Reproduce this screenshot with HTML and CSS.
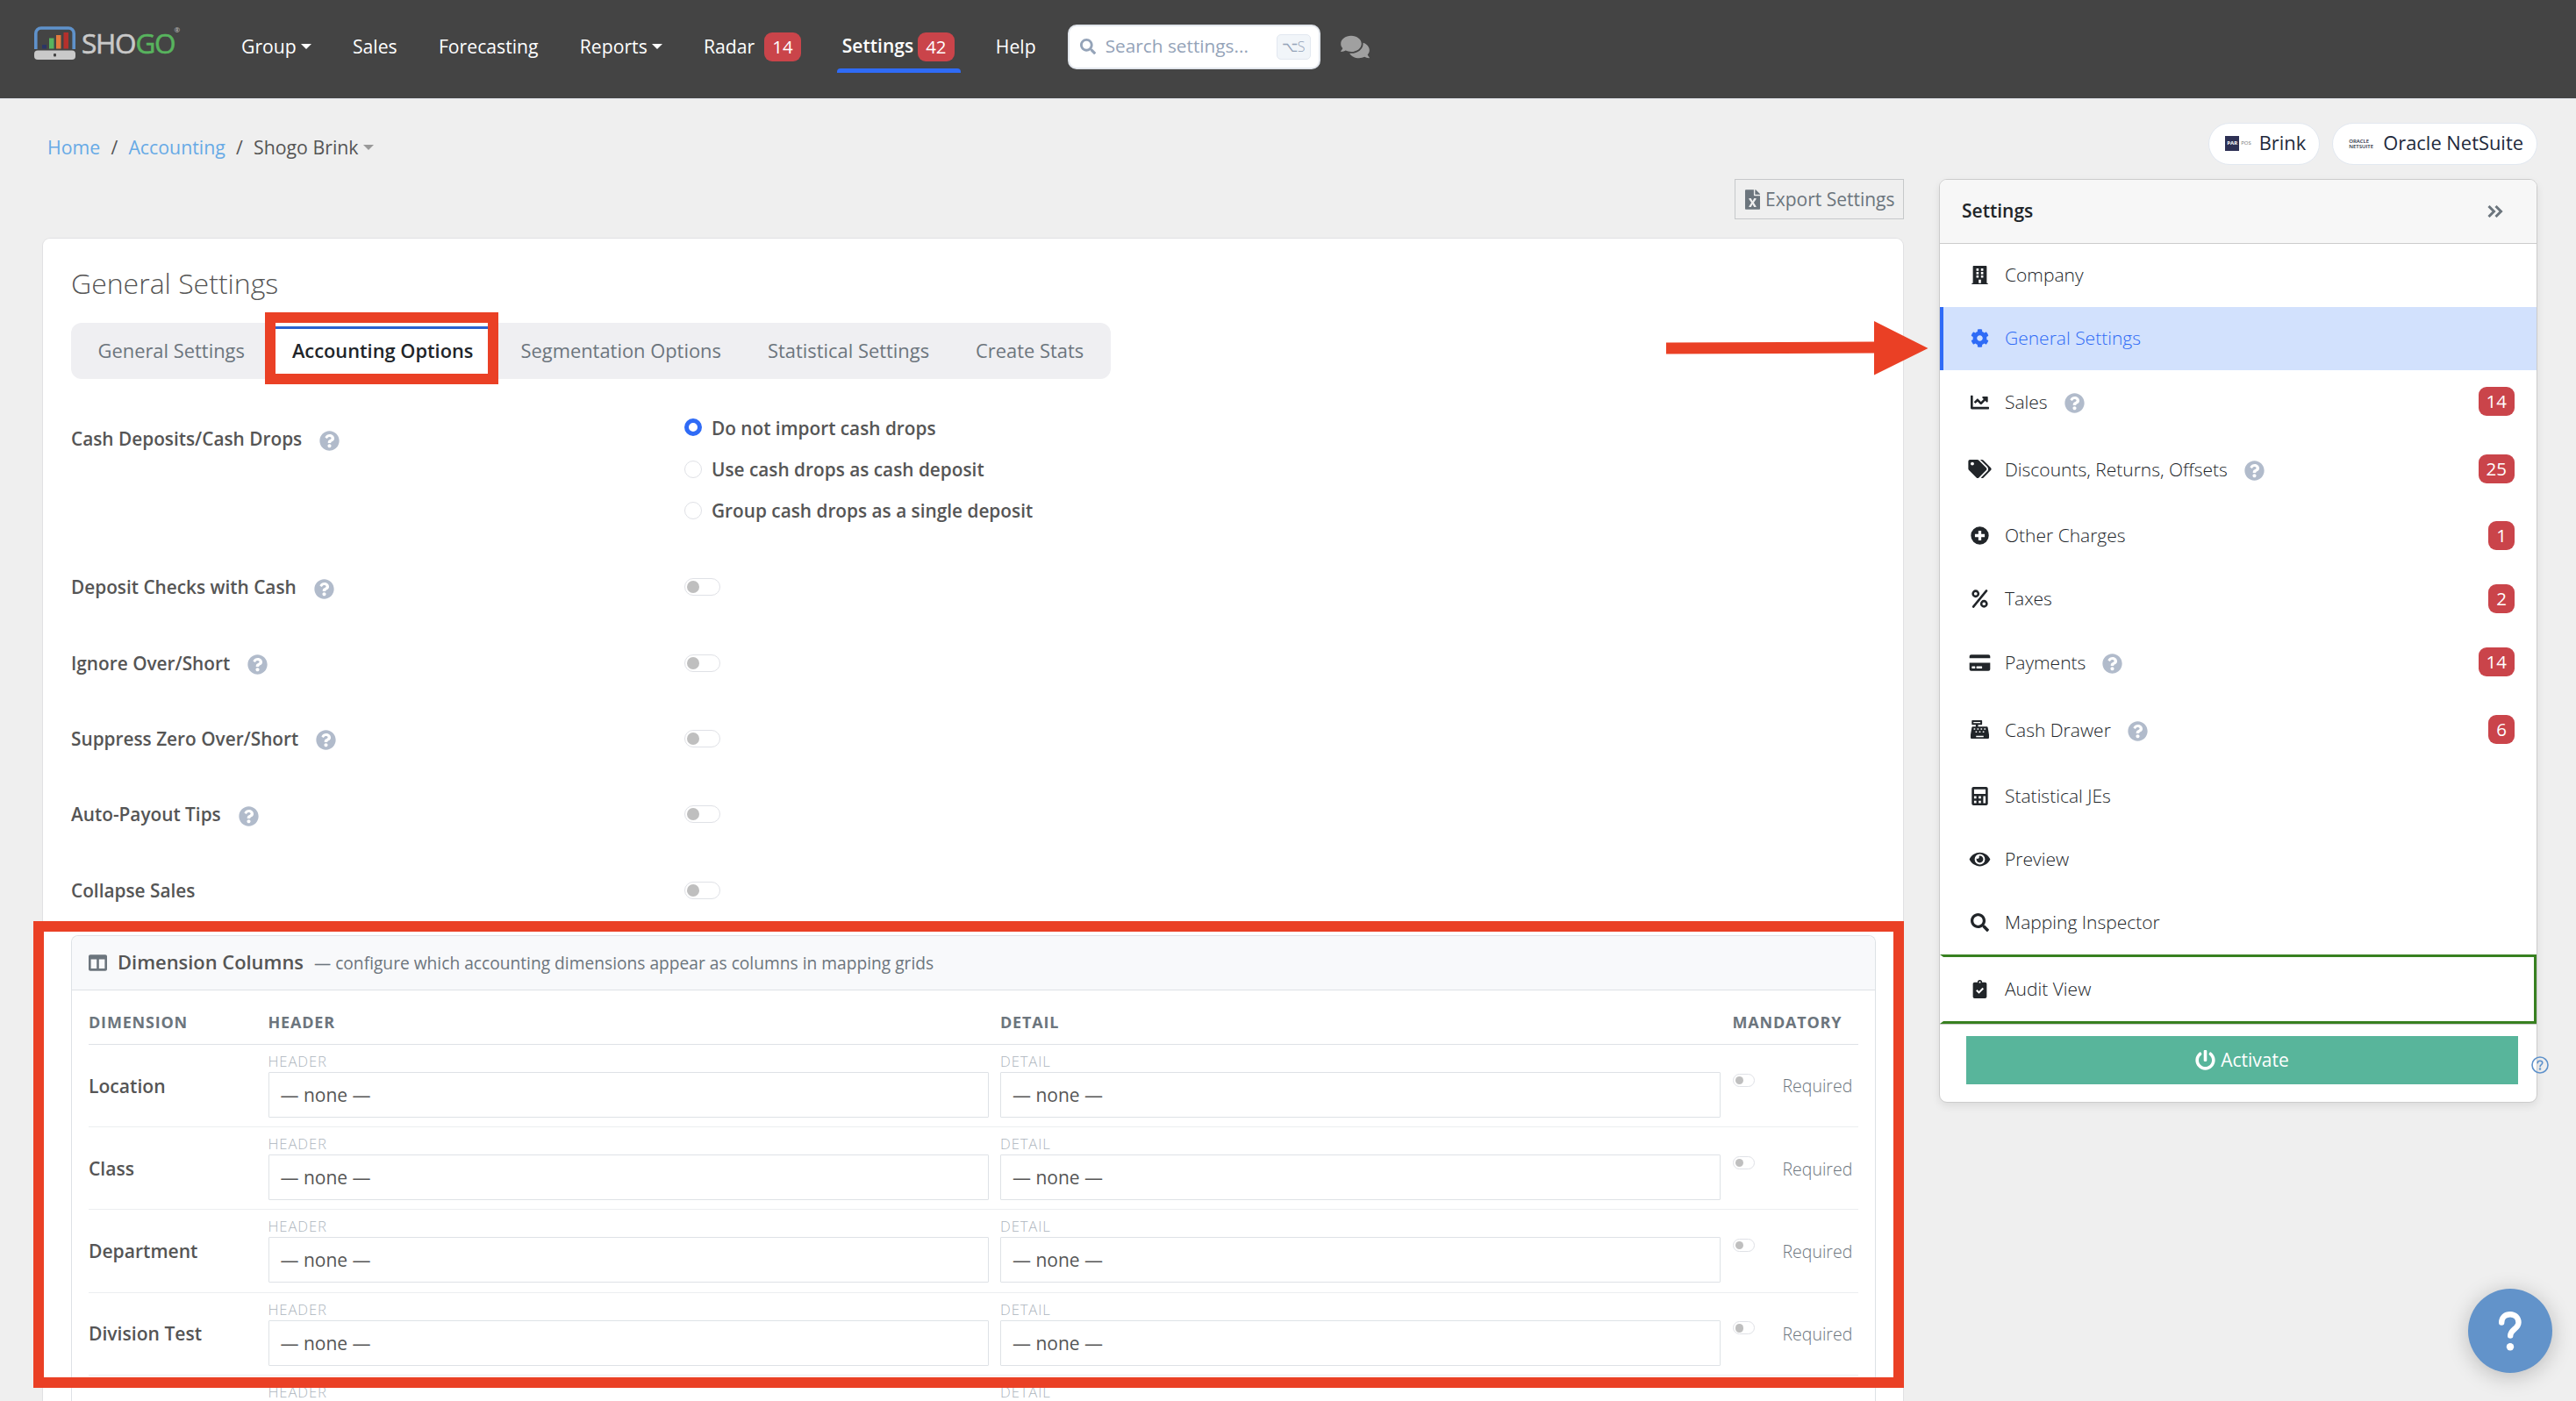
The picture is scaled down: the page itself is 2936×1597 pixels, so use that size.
FILE: index.html
```
<!DOCTYPE html>
<html lang="en">
<head>
  <meta charset="utf-8">
  <title>Shogo - General Settings</title>
  <link rel="stylesheet" href="styles.css">
</head>
<body>
  <svg class="sprite" width="0" height="0">
    <symbol id="i-help" viewBox="0 0 512 512"><path d="M504 256c0 136.997-111.043 248-248 248S8 392.997 8 256C8 119.083 119.043 8 256 8s248 111.083 248 248zM262.655 90c-54.497 0-89.255 22.957-116.549 63.758-3.536 5.286-2.353 12.415 2.715 16.258l34.699 26.31c5.205 3.947 12.621 3.008 16.665-2.122 17.864-22.658 30.113-35.797 57.303-35.797 20.429 0 45.698 13.148 45.698 32.958 0 14.976-12.363 22.667-32.534 33.976C247.128 238.528 216 254.941 216 296v4c0 6.627 5.373 12 12 12h56c6.627 0 12-5.373 12-12v-1.333c0-28.462 83.186-29.647 83.186-106.667 0-58.002-60.165-102-116.531-102zM256 338c-25.365 0-46 20.635-46 46 0 25.364 20.635 46 46 46s46-20.636 46-46c0-25.365-20.635-46-46-46z"/></symbol>
    <symbol id="i-search" viewBox="0 0 512 512"><path d="M505 442.7L405.3 343c-4.5-4.5-10.6-7-17-7H372c27.6-35.3 44-79.7 44-128C416 93.1 322.9 0 208 0S0 93.1 0 208s93.1 208 208 208c48.3 0 92.7-16.4 128-44v16.3c0 6.4 2.5 12.5 7 17l99.7 99.7c9.4 9.4 24.6 9.4 33.9 0l28.3-28.3c9.4-9.4 9.4-24.6.1-34zM208 336c-70.7 0-128-57.2-128-128 0-70.7 57.2-128 128-128 70.7 0 128 57.2 128 128 0 70.7-57.2 128-128 128z"/></symbol>
    <symbol id="i-comments" viewBox="0 0 576 512"><path d="M416 192c0-88.4-93.1-160-208-160S0 103.6 0 192c0 34.3 14.1 65.9 38 92-13.4 30.2-35.5 54.2-35.8 54.5-2.2 2.3-2.8 5.7-1.5 8.7S4.8 352 8 352c36.6 0 66.9-12.3 88.7-25 32.2 15.7 70.3 25 111.3 25 114.9 0 208-71.6 208-160zm122 220c23.9-26 38-57.7 38-92 0-66.9-53.5-124.2-129.3-148.1.9 6.6 1.3 13.3 1.3 20.1 0 105.9-107.7 192-240 192-10.8 0-21.3-.8-31.7-1.9C207.8 439.6 281.8 480 368 480c41 0 79.1-9.2 111.3-25 21.8 12.7 52.1 25 88.7 25 3.2 0 6.1-1.9 7.3-4.8 1.3-2.9.7-6.3-1.5-8.7-.3-.3-22.4-24.2-35.8-54.5z"/></symbol>
    <symbol id="i-excel" viewBox="0 0 384 512"><path d="M224 136V0H24C10.7 0 0 10.7 0 24v464c0 13.3 10.7 24 24 24h336c13.3 0 24-10.7 24-24V160H248c-13.2 0-24-10.8-24-24zm60.1 106.5L224 336l60.1 93.5c5.1 8-.6 18.5-10.1 18.5h-34.9c-4.4 0-8.5-2.4-10.6-6.3C208.9 405.5 192 373 192 373c-6.4 14.8-10 20-36.6 68.8-2.1 3.9-6.1 6.3-10.5 6.3H110c-9.5 0-15.2-10.5-10.1-18.5l60.3-93.5-60.3-93.5c-5.2-8 .6-18.5 10.1-18.5h34.8c4.4 0 8.5 2.4 10.6 6.3 26.1 48.8 20 33.6 36.6 68.5 0 0 6.1-11.7 36.6-68.5 2.1-3.9 6.2-6.3 10.6-6.3H274c9.5-.1 15.2 10.4 10.1 18.4zM384 121.9v6.1H256V0h6.1c6.4 0 12.5 2.5 17 7l97.9 98c4.5 4.5 7 10.6 7 16.9z"/></symbol>
    <symbol id="i-columns" viewBox="0 0 512 512"><path d="M464 32H48C21.49 32 0 53.49 0 80v352c0 26.51 21.49 48 48 48h416c26.51 0 48-21.49 48-48V80c0-26.51-21.49-48-48-48zM224 416H64V160h160v256zm224 0H288V160h160v256z"/></symbol>
    <symbol id="i-building" viewBox="0 0 448 512"><path fill-rule="evenodd" d="M436 480h-20V24c0-13.3-10.7-24-24-24H56C42.7 0 32 10.7 32 24v456H12c-6.6 0-12 5.4-12 12v20h448v-20c0-6.6-5.4-12-12-12zM128 76h64v64h-64zM256 76h64v64h-64zM128 172h64v64h-64zM256 172h64v64h-64zM128 268h64v64h-64zM256 268h64v64h-64zM192 384h64v96h-64z"/></symbol>
    <symbol id="i-cog" viewBox="0 0 512 512"><path d="M487.4 315.7l-42.6-24.6c4.3-23.2 4.3-47 0-70.2l42.6-24.6c4.9-2.8 7.1-8.6 5.5-14-11.1-35.6-30-67.8-54.7-94.6-3.8-4.1-10-5.1-14.8-2.3L380.8 110c-17.9-15.4-38.5-27.3-60.8-35.1V25.8c0-5.6-3.9-10.5-9.4-11.7-36.7-8.2-74.3-7.8-109.2 0-5.5 1.2-9.4 6.1-9.4 11.7V75c-22.2 7.9-42.8 19.8-60.8 35.1L88.7 85.5c-4.9-2.8-11-1.9-14.8 2.3-24.7 26.7-43.6 58.9-54.7 94.6-1.7 5.4.6 11.2 5.5 14L67.3 221c-4.3 23.2-4.3 47 0 70.2l-42.6 24.6c-4.9 2.8-7.1 8.6-5.5 14 11.1 35.6 30 67.8 54.7 94.6 3.8 4.1 10 5.1 14.8 2.3l42.6-24.6c17.9 15.4 38.5 27.3 60.8 35.1v49.2c0 5.6 3.9 10.5 9.4 11.7 36.7 8.2 74.3 7.8 109.2 0 5.5-1.2 9.4-6.1 9.4-11.7v-49.2c22.2-7.9 42.8-19.8 60.8-35.1l42.6 24.6c4.9 2.8 11 1.9 14.8-2.3 24.7-26.7 43.6-58.9 54.7-94.6 1.5-5.5-.7-11.3-5.6-14.1zM256 336c-44.1 0-80-35.9-80-80s35.9-80 80-80 80 35.9 80 80-35.9 80-80 80z"/></symbol>
    <symbol id="i-chart" viewBox="0 0 512 512"><path d="M496 384H64V80c0-8.84-7.16-16-16-16H16C7.16 64 0 71.16 0 80v336c0 17.67 14.33 32 32 32h464c8.84 0 16-7.16 16-16v-32c0-8.84-7.16-16-16-16zM464 96H345.94c-21.38 0-32.09 25.85-16.97 40.97l32.4 32.4L288 242.75l-73.37-73.37c-12.5-12.5-32.76-12.5-45.25 0l-68.69 68.69c-6.25 6.25-6.25 16.38 0 22.63l22.62 22.62c6.25 6.25 16.38 6.25 22.63 0L192 237.25l73.37 73.37c12.5 12.5 32.76 12.5 45.25 0l96-96 32.4 32.4c15.12 15.12 40.97 4.41 40.97-16.97V112c.01-8.84-7.15-16-15.99-16z"/></symbol>
    <symbol id="i-tags" viewBox="0 0 640 512"><path d="M497.941 225.941L286.059 14.059A48 48 0 0 0 252.118 0H48C21.49 0 0 21.49 0 48v204.118a48 48 0 0 0 14.059 33.941l211.882 211.882c18.744 18.745 49.136 18.746 67.882 0l204.118-204.118c18.745-18.745 18.745-49.137 0-67.882zM112 160c-26.51 0-48-21.49-48-48s21.49-48 48-48 48 21.49 48 48-21.49 48-48 48zm513.941 133.823L421.823 497.941c-18.745 18.745-49.137 18.745-67.882 0l-.36-.36L527.64 323.522c16.999-16.999 26.36-39.6 26.36-63.64s-9.362-46.641-26.36-63.64L331.397 0h48.721a48 48 0 0 1 33.941 14.059l211.882 211.882c18.745 18.745 18.745 49.137 0 67.882z"/></symbol>
    <symbol id="i-plus" viewBox="0 0 512 512"><path fill-rule="evenodd" d="M256 8a248 248 0 1 0 0 496a248 248 0 1 0 0-496zM216 120h80v96h96v80h-96v96h-80v-96h-96v-80h96z"/></symbol>
    <symbol id="i-percent" viewBox="0 0 448 512"><g fill="none" stroke="currentColor" stroke-width="62"><circle cx="108" cy="116" r="76"/><circle cx="340" cy="396" r="76"/><path stroke-linecap="round" d="M408 34L44 478"/></g></symbol>
    <symbol id="i-card" viewBox="0 0 576 512"><path d="M0 432c0 26.5 21.5 48 48 48h480c26.5 0 48-21.5 48-48V256H0v176zm192-68c0-6.6 5.4-12 12-12h136c6.6 0 12 5.4 12 12v40c0 6.6-5.4 12-12 12H204c-6.6 0-12-5.4-12-12v-40zm-128 0c0-6.6 5.4-12 12-12h72c6.6 0 12 5.4 12 12v40c0 6.6-5.4 12-12 12H76c-6.6 0-12-5.4-12-12v-40zM576 80v48H0V80c0-26.5 21.5-48 48-48h480c26.5 0 48 21.5 48 48z"/></symbol>
    <symbol id="i-register" viewBox="0 0 512 512"><path fill-rule="evenodd" d="M48 0h256c9 0 16 7 16 16v96c0 9-7 16-16 16h-96v48h240c16 0 29 11 31 27l33 202v75c0 18-14 32-32 32H32c-18 0-32-14-32-32v-75l33-202c2-16 15-27 31-27h80v-48H48c-9 0-16-7-16-16V16C32 7 39 0 48 0zM80 48v32h192V48zM88 224h40v40H88zM184 224h40v40h-40zM280 224h40v40h-40zM376 224h40v40h-40zM136 304h40v40h-40zM236 304h40v40h-40zM336 304h40v40h-40zM152 432h208v36H152z"/></symbol>
    <symbol id="i-calculator" viewBox="0 0 448 512"><path fill-rule="evenodd" d="M400 0H48C22.4 0 0 22.4 0 48v416c0 25.6 22.4 48 48 48h352c25.6 0 48-22.4 48-48V48c0-25.6-22.4-48-48-48zM64 64h320v128H64zM64 256h64v64H64zM192 256h64v64h-64zM320 256h64v192h-64zM64 384h64v64H64zM192 384h64v64h-64z"/></symbol>
    <symbol id="i-eye" viewBox="0 0 576 512"><path d="M572.52 241.4C518.29 135.59 410.93 64 288 64S57.68 135.64 3.48 241.41a32.35 32.35 0 0 0 0 29.19C57.71 376.41 165.07 448 288 448s230.32-71.64 284.52-177.41a32.35 32.35 0 0 0 0-29.19zM288 400a144 144 0 1 1 144-144 143.93 143.93 0 0 1-144 144zm0-240a95.31 95.31 0 0 0-25.31 3.79 47.85 47.85 0 0 1-66.9 66.9A95.78 95.78 0 1 0 288 160z"/></symbol>
    <symbol id="i-clipboard" viewBox="0 0 384 512"><path fill-rule="evenodd" d="M336 64h-80a64 64 0 0 0-128 0H48C21.5 64 0 85.5 0 112v352c0 26.5 21.5 48 48 48h288c26.5 0 48-21.5 48-48V112c0-26.5-21.5-48-48-48zM192 40a24 24 0 1 1 0 48a24 24 0 1 1 0-48zM84 302l36-36 48 48 98-98 36 36-134 134z"/></symbol>
    <symbol id="i-power" viewBox="0 0 512 512"><path d="M400 54.1c63 45 104 118.6 104 201.9 0 136.8-110.8 247.7-247.5 248C120 504.3 8.2 393 8 256.4 7.9 173.1 48.9 99.3 111.8 54.2c11.7-8.3 28-4.8 35 7.7L162.6 90c5.9 10.5 3.1 23.8-6.6 31-41.5 30.8-68 79.6-68 134.9-.1 92.3 74.5 168.1 168 168.1 91.6 0 168.6-74.2 168-169.1-.3-51.8-24.7-101.8-68.1-134-9.7-7.2-12.4-20.5-6.5-30.9l15.8-28.1c7-12.4 23.2-16.1 34.8-7.8zM296 264V24c0-13.3-10.7-24-24-24h-32c-13.3 0-24 10.7-24 24v240c0 13.3 10.7 24 24 24h32c13.3 0 24-10.7 24-24z"/></symbol>
  </svg>

  <header class="navbar">
    <a class="logo">
      <svg width="48" height="38" viewBox="0 0 48 38">
        <path d="M1.8 26V8a6 6 0 0 1 6-6h31.4a6 6 0 0 1 6 6v18" fill="none" stroke="#5f92cb" stroke-width="3.6"/>
        <rect x="9" y="21" width="5" height="4.5" fill="#2b3566"/>
        <rect x="17" y="13.5" width="5.5" height="12" fill="#58b45e"/>
        <rect x="25" y="10" width="5.5" height="15.5" fill="#e27a3d"/>
        <rect x="33.5" y="7" width="5.5" height="18.5" fill="#b5302c"/>
        <rect x="0" y="27.5" width="47" height="10.5" rx="4" fill="#c9c9c9"/>
        <rect x="22" y="31" width="3" height="3.5" rx="1" fill="#444"/>
      </svg>
      <span class="logo-text">SHO<b>GO</b></span><sup>®</sup>
    </a>
    <nav class="nav">
      <a>Group<i class="caret"></i></a>
      <a>Sales</a>
      <a>Forecasting</a>
      <a>Reports<i class="caret"></i></a>
      <a>Radar<span class="badge radar-badge">14</span></a>
      <a class="current">Settings<span class="badge">42</span></a>
      <a>Help</a>
    </nav>
    <div class="search">
      <svg class="search-icon"><use href="#i-search"/></svg>
      <span>Search settings...</span>
      <kbd>⌥S</kbd>
    </div>
    <svg class="comments"><use href="#i-comments"/></svg>
  </header>

  <div class="topline">
    <div class="breadcrumb">
      <a>Home</a><span class="sep">/</span><a>Accounting</a><span class="sep">/</span><span class="here">Shogo Brink</span><i class="caret small"></i>
    </div>
    <div class="pills">
      <span class="pill"><span class="par"><b>PAR</b>POS</span>Brink</span>
      <span class="pill"><span class="oracle">ORACLE<br>NETSUITE</span>Oracle NetSuite</span>
    </div>
  </div>

  <div class="page">
    <main class="main">
      <button class="export"><svg><use href="#i-excel"/></svg>Export Settings</button>

      <section class="card">
        <h1>General Settings</h1>
        <div class="tabs">
          <a>General Settings</a>
          <a class="active">Accounting Options</a>
          <a>Segmentation Options</a>
          <a>Statistical Settings</a>
          <a>Create Stats</a>
        </div>

        <div class="option option-top">
          <label>Cash Deposits/Cash Drops<svg class="help"><use href="#i-help"/></svg></label>
          <div class="radios">
            <div class="radio"><i class="dot checked"></i>Do not import cash drops</div>
            <div class="radio"><i class="dot"></i>Use cash drops as cash deposit</div>
            <div class="radio"><i class="dot"></i>Group cash drops as a single deposit</div>
          </div>
        </div>
        <div class="option"><label>Deposit Checks with Cash<svg class="help"><use href="#i-help"/></svg></label><i class="toggle"></i></div>
        <div class="option"><label>Ignore Over/Short<svg class="help"><use href="#i-help"/></svg></label><i class="toggle"></i></div>
        <div class="option"><label>Suppress Zero Over/Short<svg class="help"><use href="#i-help"/></svg></label><i class="toggle"></i></div>
        <div class="option"><label>Auto-Payout Tips<svg class="help"><use href="#i-help"/></svg></label><i class="toggle"></i></div>
        <div class="option"><label>Collapse Sales</label><i class="toggle"></i></div>

        <div class="panel">
          <div class="panel-head">
            <svg><use href="#i-columns"/></svg>
            <strong>Dimension Columns</strong>
            <span>— configure which accounting dimensions appear as columns in mapping grids</span>
          </div>
          <div class="grid">
            <div class="row head"><span>Dimension</span><span>Header</span><span>Detail</span><span>Mandatory</span></div>
            <div class="row">
              <div class="name">Location</div>
              <div class="field"><small>Header</small><div class="select">— none —</div></div>
              <div class="field"><small>Detail</small><div class="select">— none —</div></div>
              <div class="required"><i class="toggle mini"></i>Required</div>
            </div>
            <div class="row">
              <div class="name">Class</div>
              <div class="field"><small>Header</small><div class="select">— none —</div></div>
              <div class="field"><small>Detail</small><div class="select">— none —</div></div>
              <div class="required"><i class="toggle mini"></i>Required</div>
            </div>
            <div class="row">
              <div class="name">Department</div>
              <div class="field"><small>Header</small><div class="select">— none —</div></div>
              <div class="field"><small>Detail</small><div class="select">— none —</div></div>
              <div class="required"><i class="toggle mini"></i>Required</div>
            </div>
            <div class="row">
              <div class="name">Division Test</div>
              <div class="field"><small>Header</small><div class="select">— none —</div></div>
              <div class="field"><small>Detail</small><div class="select">— none —</div></div>
              <div class="required"><i class="toggle mini"></i>Required</div>
            </div>
            <div class="row cut">
              <div class="name"></div>
              <div class="field"><small>Header</small></div>
              <div class="field"><small>Detail</small></div>
              <div class="required"></div>
            </div>
          </div>
        </div>
      </section>
    </main>

    <aside class="side">
      <div class="side-head">Settings
        <svg width="18" height="14" viewBox="0 0 18 14" fill="none" stroke="#6c757d" stroke-width="3"><path d="M1.5 1l6 6-6 6M9.5 1l6 6-6 6"/></svg>
      </div>
      <a class="item"><svg><use href="#i-building"/></svg>Company</a>
      <a class="item selected"><svg><use href="#i-cog"/></svg>General Settings</a>
      <a class="item tall"><svg><use href="#i-chart"/></svg>Sales<svg class="help"><use href="#i-help"/></svg><span class="badge">14</span></a>
      <a class="item tall"><svg><use href="#i-tags"/></svg>Discounts, Returns, Offsets<svg class="help"><use href="#i-help"/></svg><span class="badge">25</span></a>
      <a class="item"><svg><use href="#i-plus"/></svg>Other Charges<span class="badge">1</span></a>
      <a class="item"><svg><use href="#i-percent"/></svg>Taxes<span class="badge">2</span></a>
      <a class="item tall"><svg><use href="#i-card"/></svg>Payments<svg class="help"><use href="#i-help"/></svg><span class="badge">14</span></a>
      <a class="item tall"><svg><use href="#i-register"/></svg>Cash Drawer<svg class="help"><use href="#i-help"/></svg><span class="badge">6</span></a>
      <a class="item"><svg><use href="#i-calculator"/></svg>Statistical JEs</a>
      <a class="item"><svg><use href="#i-eye"/></svg>Preview</a>
      <a class="item"><svg><use href="#i-search"/></svg>Mapping Inspector</a>
      <a class="item audit"><svg><use href="#i-clipboard"/></svg>Audit View</a>
      <div class="side-foot">
        <button class="activate"><svg><use href="#i-power"/></svg>Activate</button>
        <svg class="tip" viewBox="0 0 20 20" fill="none" stroke="#5f92cb" stroke-width="1.6"><circle cx="10" cy="10" r="9"/><path d="M7.2 7.8c0-1.7 1.200-2.600 2.800-2.600s2.800 1 2.800 2.400c0 2-2.700 1.900-2.700 4.100" stroke-linecap="round"/><circle cx="10" cy="14.500" r=".5"/></svg>
      </div>
    </aside>
  </div>

  <!-- callouts drawn over the page -->
  <div class="mark mark-tab"></div>
  <div class="mark mark-panel"></div>
  <svg class="arrow" width="300" height="64" viewBox="0 0 300 64"><path d="M0 25.500l237-1V1l61.500 31L237 62.500V37.500L0 38.500z" fill="#ea4025"/></svg>

  <button class="fab">
    <svg width="32" height="48" viewBox="0 0 32 48" fill="none" stroke="#fff" stroke-width="6.400" stroke-linecap="round"><path d="M6.200 14.500c0-6 4.300-9.300 9.800-9.300s9.500 3.900 9.500 9.200c0 7.300-9.300 7.800-9.300 15.200"/><circle cx="16" cy="42.300" r="4.200" fill="#fff" stroke="none"/></svg>
  </button>
</body>
</html>
```
FILE: styles.css
```
* {
  box-sizing: border-box;
}
html, body {
  height: 1597px;
  overflow: hidden;
}
body {
  position: relative;
  margin: 0;
  background: #efefef;
  color: #555;
  font-family: "Open Sans", sans-serif;
  font-size: 21px;
  line-height: 1.4;
}
svg {
  fill: currentColor;
  flex: none;
}
svg[fill="none"] {
  fill: none;
}
.sprite {
  position: absolute;
}
button {
  font: inherit;
  border: none;
  padding: 0;
}

/* top bar */
.navbar {
  display: flex;
  align-items: center;
  height: 113px;
  padding: 0 0 6px 39px;
  background: #444;
  border-bottom: 1px solid #dfe2e8;
  color: #fff;
}
.logo {
  display: flex;
  align-items: center;
  width: 236px;
  margin-top: -8px;
}
.logo-text {
  margin-left: 6px;
  font-size: 31.5px;
  letter-spacing: -1.2px;
  color: #c9c9c9;
  -webkit-text-stroke: 0.6px;
}
.logo-text b {
  font-weight: 400;
  color: #58b45e;
}
.logo sup {
  align-self: flex-start;
  font-size: 8px;
  margin-top: 1px;
  margin-left: -1px;
  color: #c9c9c9;
}
.nav {
  display: flex;
  align-items: center;
  gap: 47.2px;
  font-size: 21.2px;
}
.nav a {
  display: flex;
  align-items: center;
}
.caret {
  margin-left: 5px;
  border: 6px solid transparent;
  border-top-color: currentColor;
  border-bottom: 0;
}
.caret.small {
  border-width: 6px;
  border-bottom: 0;
  color: #999;
}
.badge {
  height: 33px;
  padding: 0 9px;
  border-radius: 9px;
  background: #ca444a;
  color: #fff;
  font-size: 20.5px;
  font-weight: 400;
  line-height: 33px;
}
.nav .badge {
  margin-left: 5px;
}
.nav .radar-badge {
  margin-left: 11px;
}
.nav .current {
  position: relative;
  font-weight: 600;
  font-size: 21px;
}
.nav .current::after {
  content: "";
  position: absolute;
  left: -6px;
  right: -7px;
  top: 41px;
  height: 5px;
  border-radius: 4px 4px 0 0;
  background: #2f6bf6;
}
.search {
  display: flex;
  align-items: center;
  width: 288px;
  height: 51px;
  margin-left: 36px;
  padding: 0 9px 0 12px;
  border: 2px solid #e2e6ec;
  border-radius: 10px;
  background: #fff;
  color: #94a3b8;
  font-size: 20.8px;
}
.search-icon {
  width: 18px;
  height: 18px;
  margin-right: 11px;
}
kbd {
  width: 39px;
  height: 29px;
  margin-left: auto;
  border: 1px solid #e2e8f0;
  border-radius: 5px;
  background: #f1f5f9;
  font: 300 16px/26px "Open Sans", "DejaVu Sans", sans-serif;
  text-align: center;
}
.comments {
  width: 33px;
  height: 29px;
  margin-left: 23px;
  color: #a0a0a0;
}

/* breadcrumb and integrations */
.topline {
  display: flex;
  justify-content: space-between;
  align-items: center;
  height: 48px;
  margin: 27px 44px 16px 54px;
}
.breadcrumb {
  display: flex;
  align-items: center;
  padding-top: 8px;
  font-size: 21.3px;
}
.breadcrumb a {
  color: #67aae6;
}
.breadcrumb .sep {
  margin: 0 12.2px;
}
.pills {
  display: flex;
  gap: 14px;
}
.pill {
  display: flex;
  align-items: center;
  height: 48px;
  padding: 0 15px 1px 18px;
  border: 1px solid #e2e8f0;
  border-radius: 24px;
  background: #fff;
  color: #1e293b;
  font-size: 21.9px;
}
.par {
  display: flex;
  align-items: center;
  width: 38.5px;
  font-size: 6px;
  color: #777;
}
.par b {
  width: 16px;
  height: 17px;
  margin-right: 2px;
  background: #2d3054;
  color: #fff;
  line-height: 17px;
  text-align: center;
}
.oracle {
  width: 39px;
  font-size: 6px;
  font-weight: 600;
  line-height: 6px;
}

.page {
  display: flex;
  align-items: flex-start;
  gap: 40px;
  padding-left: 48px;
}
.main {
  width: 2122px;
}
.export {
  display: flex;
  align-items: center;
  width: 193px;
  height: 46px;
  margin: 0 0 21px auto;
  padding: 1px 0 0 11px;
  border: 1px solid #c6c8ca;
  background: #efefef;
  color: #6c757d;
}
.export svg {
  width: 17px;
  height: 23px;
  margin-right: 6px;
}
.card {
  height: 1326px;
  padding: 28px 31px 0 32px;
  border: 1px solid #e1e1e3;
  border-bottom: 0;
  border-radius: 9px 9px 0 0;
  background: #fff;
}
h1 {
  margin: 0 0 23px;
  padding-top: 1px;
  font-size: 32px;
  font-weight: 300;
  line-height: 44px;
}
.tabs {
  display: inline-flex;
  height: 64px;
  padding: 4px;
  border-radius: 12px;
  background: #efeff2;
  vertical-align: top;
  color: #6c757d;
  font-size: 21.9px;
}
.tabs a {
  padding: 0 26.5px;
  line-height: 55px;
}
.tabs .active {
  padding: 0 27.5px;
  border-top: 3px solid #2b62cf;
  background: #fff;
  box-shadow: 0 -4px 0 #fff;
  color: #212529;
  font-size: 21.8px;
  font-weight: 600;
  line-height: 50px;
}

/* options */
.option {
  display: flex;
  align-items: center;
  height: 86.4px;
  font-size: 20.8px;
  font-weight: 600;
}
.option-top {
  align-items: flex-start;
  height: 162px;
  margin-top: 32px;
}
.option label {
  display: flex;
  align-items: center;
  width: 699px;
  padding-top: 1px;
}
.option-top label {
  height: 48px;
  margin-top: 12px;
}
.help {
  width: 23px;
  height: 23px;
  margin: 3px 0 0 20px;
  color: #b1bbcb;
}
.radio {
  display: flex;
  align-items: center;
  height: 47.4px;
  padding-top: 1px;
}
.dot {
  width: 20px;
  height: 20px;
  margin: -2px 11px 0 0;
  border: 1px solid #dfe1e6;
  border-radius: 50%;
}
.dot.checked {
  border: 5.5px solid #2f6bf6;
}
.toggle {
  width: 41px;
  height: 20px;
  padding: 2px;
  border: 1px solid #dfe1e6;
  border-radius: 10px;
}
.toggle::before {
  content: "";
  display: block;
  width: 14px;
  height: 14px;
  border-radius: 50%;
  background: #bfbfbf;
}
.toggle.mini {
  width: 25px;
  height: 15px;
  margin: -14px 32px 0 0;
}
.toggle.mini::before {
  width: 9.5px;
  height: 9.5px;
}

/* dimension columns */
.panel {
  height: 531px;
  margin-top: 8px;
  border: 1px solid #dee2e6;
  border-bottom: 0;
  border-radius: 8px 8px 0 0;
}
.panel-head {
  display: flex;
  align-items: center;
  height: 62px;
  padding-left: 19px;
  border-bottom: 1px solid #dee2e6;
  border-radius: 8px 8px 0 0;
  background: #f8f9fb;
}
.panel-head svg {
  width: 21px;
  height: 21px;
  margin-right: 12px;
  color: #6c757d;
}
.panel-head strong {
  font-size: 21.9px;
  font-weight: 600;
}
.panel-head span {
  margin-left: 12px;
  padding-top: 2px;
  font-size: 19.2px;
  color: #6c757d;
}
.grid {
  padding: 0 19px;
}
.row {
  display: grid;
  grid-template-columns: 191px 821px 821px 144px;
  column-gap: 13.5px;
  align-items: center;
  height: 94.2px;
  border-bottom: 1px solid #eceef0;
}
.row.head {
  height: 62px;
  padding-top: 13px;
  border-color: #dee2e6;
  color: #6c757d;
  font-size: 18px;
  font-weight: 700;
  letter-spacing: 0.8px;
  text-transform: uppercase;
}
/* last visible row, ends with the viewport */
.row.cut {
  height: 28px;
  border-bottom: 0;
}
.name {
  font-size: 21.1px;
  font-weight: 600;
}
.field {
  align-self: start;
  padding-top: 9px;
}
.field small {
  display: block;
  margin-bottom: 2px;
  color: #adb5bd;
  font-size: 16.7px;
  font-weight: 300;
  letter-spacing: 0.85px;
  line-height: 20px;
  text-transform: uppercase;
}
.select {
  height: 52px;
  padding-left: 13px;
  border: 1px solid #dee2e6;
  border-radius: 1px;
  line-height: 50px;
}
.required {
  display: flex;
  align-items: center;
  padding-top: 1px;
  color: #6c757d;
  font-size: 19.5px;
  font-weight: 300;
}

/* settings menu */
.side {
  width: 682px;
  height: 1053px;
  border: 1px solid #ccc;
  border-radius: 9px;
  background: #fff;
  box-shadow: 0 4px 10px rgba(0, 0, 0, 0.08);
}
.side-head {
  display: flex;
  align-items: center;
  justify-content: space-between;
  height: 73px;
  padding: 0 38px 0 25px;
  border-bottom: 1px solid #ccc;
  border-radius: 8px 8px 0 0;
  background: #f7f7f7;
  color: #212529;
  font-weight: 600;
}
.item {
  display: flex;
  align-items: center;
  height: 72px;
  padding: 0 25px 0 28px;
  border-left: 4px solid transparent;
  color: #212529;
  font-weight: 300;
}
.item > svg:first-child {
  width: 27px;
  height: 21px;
  margin: -1px 15px 0 0;
}
.item.tall {
  height: 76.5px;
  padding-bottom: 3px;
}
.item .help {
  width: 23px;
  height: 23px;
  margin: 2px 0 0 19px;
}
.item .badge {
  margin: -2px 0 0 auto;
}
.item.selected {
  border-left-color: #2f6bf6;
  background: #d2e1fd;
  color: #2f6bf6;
}
.item.audit {
  height: 79px;
  padding-right: 23px;
  border: 3px solid #388020;
  border-left: 4px solid transparent;
}
.side-foot {
  position: relative;
  padding: 13px 21px 0 30px;
  border-top: 1px solid #ccc;
}
.activate {
  display: flex;
  align-items: center;
  justify-content: center;
  width: 100%;
  height: 55px;
  background: #58b59b;
  color: #fff;
}
.activate svg {
  width: 23px;
  height: 23px;
  margin-right: 6px;
}
.tip {
  position: absolute;
  right: -14px;
  top: 36px;
  width: 20px;
  height: 20px;
}

/* callouts */
.mark {
  position: absolute;
  border: 12px solid #ea4025;
}
.mark-tab {
  left: 302px;
  top: 356px;
  width: 266px;
  height: 82px;
}
.mark-panel {
  left: 38px;
  top: 1050px;
  width: 2132px;
  height: 532px;
}
.arrow {
  position: absolute;
  left: 1899px;
  top: 365px;
}
.fab {
  position: absolute;
  left: 2813px;
  top: 1469px;
  display: flex;
  align-items: center;
  justify-content: center;
  width: 96px;
  height: 96px;
  border-radius: 50%;
  background: #6293ca;
  box-shadow: 0 4px 24px rgba(0, 0, 0, 0.22);
}
```
